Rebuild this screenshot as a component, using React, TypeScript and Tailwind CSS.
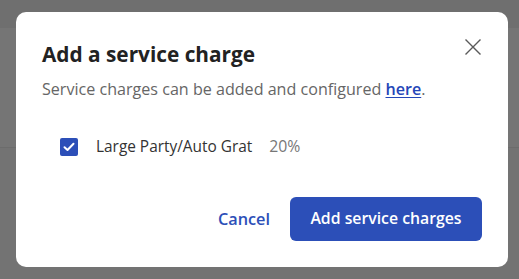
import React from 'react';

const CloseIcon: React.FC = () => (
  <svg width="16" height="16" viewBox="0 0 16 16" fill="none" stroke="#5a5a5a" strokeWidth="1.4" strokeLinecap="square">
    <path d="M1 1L15 15M15 1L1 15" />
  </svg>
);

const CheckIcon: React.FC = () => (
  <svg width="12" height="10" viewBox="0 0 12 10" fill="none" stroke="white" strokeWidth="2" strokeLinecap="round" strokeLinejoin="round">
    <path d="M1.5 5.2L4.5 8L10.5 1.8" />
  </svg>
);

const App: React.FC = () => {
  return (
    <div className="relative w-[519px] h-[279px] overflow-hidden bg-[#757575] font-['Open_Sans',sans-serif]">
      {/* Dimmed page behind */}
      <div className="flex flex-col h-full">
        <div className="h-[28px] bg-[#6f6f6f]" />
        <div className="flex-1 border-b border-[#6c6c6c] max-h-[120px]" />
        <div className="flex-1 bg-[#737373]" />
      </div>

      {/* Modal */}
      <div className="absolute left-[16px] top-[12px] w-[492px] h-[255px] bg-white rounded-[10px] flex flex-col px-[26px] pt-[28px] pb-[26px]">
        <div className="flex items-start justify-between">
          <h2 className="text-[20.8px] leading-[28px] font-bold text-[#222]">Add a service charge</h2>
          <button className="mt-[-1px] mr-[1px]"><CloseIcon /></button>
        </div>
        <p className="mt-[10px] text-[16.1px] leading-[22px] text-[#666]">
          Service charges can be added and configured{' '}
          <a className="text-[#2546b8] font-semibold underline underline-offset-2">here</a>.
        </p>

        <label className="mt-[35px] ml-[18px] flex items-center gap-[18px]">
          <span className="w-[18px] h-[18px] rounded-[2px] bg-[#2c4fb8] flex items-center justify-center">
            <CheckIcon />
          </span>
          <span className="text-[15.4px] text-[#333]">
            Large Party/Auto Grat<span className="ml-[17px] text-[15.8px] text-[#777]">20%</span>
          </span>
        </label>

        <div className="mt-auto flex items-center justify-end gap-[20px]">
          <button className="text-[16.3px] font-semibold text-[#2c4fb8]">Cancel</button>
          <button className="h-[44px] w-[192px] rounded-[6px] bg-[#2c4fb8] text-white text-[15.8px] font-semibold">
            Add service charges
          </button>
        </div>
      </div>
    </div>
  );
};

export default App;
